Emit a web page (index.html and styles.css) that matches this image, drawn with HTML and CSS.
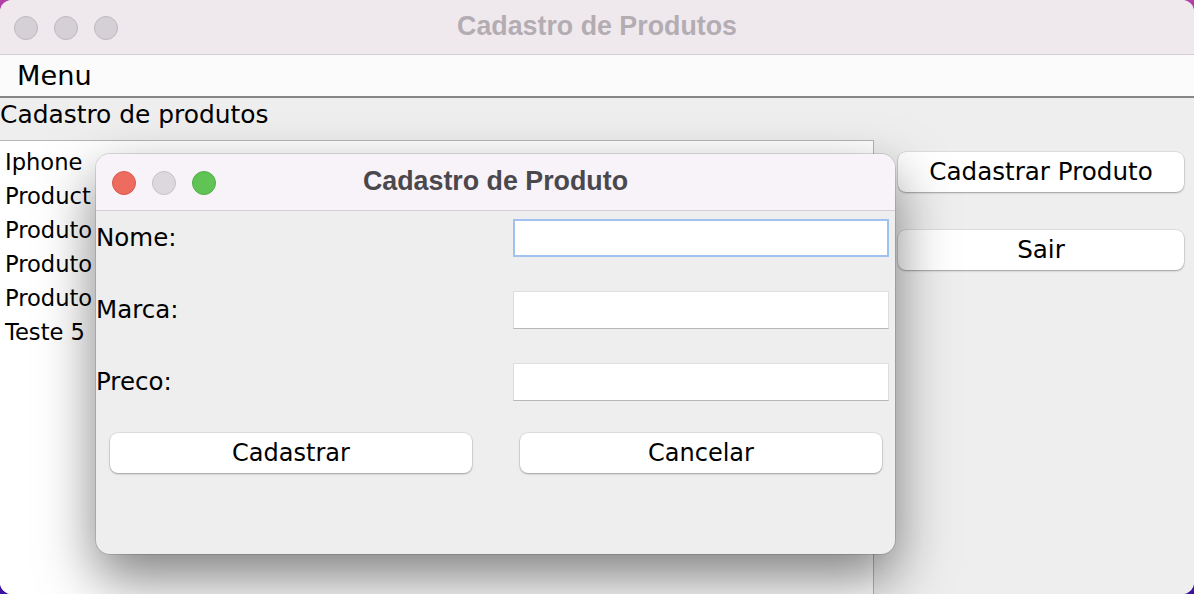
FILE: index.html
```html
<!DOCTYPE html>
<html lang="pt">
<head>
<meta charset="utf-8">
<title>Cadastro de Produtos</title>
<link rel="stylesheet" href="styles.css">
</head>
<body>
<div class="window">
  <div class="titlebar">
    <div class="lights">
      <span class="light gray"></span>
      <span class="light gray"></span>
      <span class="light gray"></span>
    </div>
    <div class="title">Cadastro de Produtos</div>
    <div></div>
  </div>
  <div class="menubar"><span class="menu-item">Menu</span></div>
  <div class="content">
    <div class="section-label">Cadastro de produtos</div>
    <div class="main-row">
      <div class="list">
        <div class="list-item">Iphone</div>
        <div class="list-item">Product</div>
        <div class="list-item">Produto</div>
        <div class="list-item">Produto</div>
        <div class="list-item">Produto</div>
        <div class="list-item">Teste 5</div>
      </div>
      <div class="side">
        <button class="btn side-btn">Cadastrar Produto</button>
        <button class="btn side-btn">Sair</button>
      </div>
    </div>
  </div>

  <div class="dialog">
    <div class="dlg-titlebar">
      <div class="lights dlg-lights">
        <span class="light red"></span>
        <span class="light gray2"></span>
        <span class="light green"></span>
      </div>
      <div class="dlg-title">Cadastro de Produto</div>
      <div></div>
    </div>
    <div class="dlg-body">
      <div class="form">
        <label class="lbl">Nome:</label>
        <div class="field focused"></div>
        <label class="lbl">Marca:</label>
        <div class="field"></div>
        <label class="lbl">Preco:</label>
        <div class="field"></div>
      </div>
      <div class="dlg-buttons">
        <button class="btn dlg-btn">Cadastrar</button>
        <button class="btn dlg-btn">Cancelar</button>
      </div>
    </div>
  </div>
</div>
</body>
</html>
```

FILE: styles.css
```css
html, body {
  margin: 0;
  padding: 0;
}
body {
  width: 1194px;
  height: 594px;
  overflow: hidden;
  background: linear-gradient(to bottom, #b43fa6 0%, #6a2aa8 60%, #3c12a0 100%);
  font-family: "DejaVu Sans", "Liberation Sans", sans-serif;
  color: #000;
}
.window {
  position: relative;
  width: 1194px;
  height: 594px;
  border-radius: 12px;
  overflow: hidden;
  background: #eeeeee;
  display: flex;
  flex-direction: column;
}
.titlebar {
  height: 54px;
  flex: none;
  background: #efe9ee;
  border-bottom: 1px solid #d2ced2;
  display: grid;
  grid-template-columns: 1fr auto 1fr;
  align-items: center;
}
.lights {
  display: flex;
  gap: 16px;
  padding-left: 14px;
  padding-top: 1px;
}
.light {
  width: 22px;
  height: 22px;
  border-radius: 50%;
  display: block;
}
.light.gray {
  background: #d5d0d5;
  border: 1px solid #bdb8bd;
}
.light.red {
  background: #ee6b5f;
  border: 1px solid #d65a4e;
}
.light.gray2 {
  background: #dcd8dd;
  border: 1px solid #c5c1c6;
}
.light.green {
  background: #5fc454;
  border: 1px solid #52ae47;
}
.title {
  font-family: "Liberation Sans", Arial, sans-serif;
  font-weight: bold;
  font-size: 26.8px;
  color: #b3adb3;
  padding-bottom: 2px;
}
.menubar {
  height: 41px;
  flex: none;
  background: #fbfbfb;
  border-bottom: 2px solid #878787;
  padding-left: 17px;
  font-size: 27.2px;
  line-height: 42px;
}
.content {
  flex: 1;
  display: flex;
  flex-direction: column;
  background: #eeeeee;
}
.section-label {
  height: 42px;
  flex: none;
  font-size: 24.9px;
  line-height: 34px;
  padding-left: 0;
}
.main-row {
  flex: 1;
  display: flex;
}
.list {
  width: 868px;
  flex: none;
  background: #ffffff;
  border-top: 1px solid #b5b5b5;
  border-right: 1px solid #b5b5b5;
  padding: 4px 0 0 5px;
  font-size: 22.6px;
  line-height: 34px;
}
.list-item {
  white-space: nowrap;
}
.side {
  flex: 1;
  display: flex;
  flex-direction: column;
  gap: 38px;
  padding: 12px 10px 0 24px;
}
.btn {
  font-family: "DejaVu Sans", "Liberation Sans", sans-serif;
  font-size: 24px;
  color: #000;
  background: #ffffff;
  border: none;
  border-radius: 8px;
  box-shadow: 0 0 0 0.5px rgba(0,0,0,0.12), 0 1px 2px rgba(0,0,0,0.3);
  height: 40px;
  padding: 0;
  margin: 0;
  line-height: 40px;
}
.side-btn {
  width: 286px;
  font-size: 24.6px;
}
.dialog {
  position: absolute;
  left: 96px;
  top: 154px;
  width: 799px;
  height: 400px;
  border-radius: 14px;
  background: #eeeeee;
  box-shadow: 0 0 0 1px rgba(0,0,0,0.12), 0 24px 55px rgba(0,0,0,0.5);
  overflow: hidden;
  display: flex;
  flex-direction: column;
}
.dlg-titlebar {
  height: 56px;
  flex: none;
  background: #f7f3f8;
  border-bottom: 1px solid #d3d0d3;
  display: grid;
  grid-template-columns: 1fr auto 1fr;
  align-items: center;
}
.dlg-lights {
  padding-left: 16px;
  gap: 16px;
}
.dlg-title {
  font-family: "Liberation Sans", Arial, sans-serif;
  font-weight: bold;
  font-size: 26.8px;
  color: #4b484d;
  padding-bottom: 2px;
}
.dlg-body {
  flex: 1;
  padding-top: 8px;
}
.form {
  display: grid;
  grid-template-columns: 417px 376px;
  row-gap: 34px;
  align-items: center;
}
.lbl {
  font-size: 24.5px;
  line-height: 38px;
}
.field {
  height: 38px;
  box-sizing: border-box;
  background: #ffffff;
  border: 1px solid #dedede;
  border-bottom: 1px solid #b8b8b8;
}
.field.focused {
  border: 2px solid #a0c2ee;
}
.dlg-buttons {
  display: flex;
  gap: 48px;
  padding-left: 14px;
  margin-top: 32px;
}
.dlg-btn {
  width: 362px;
}
```
